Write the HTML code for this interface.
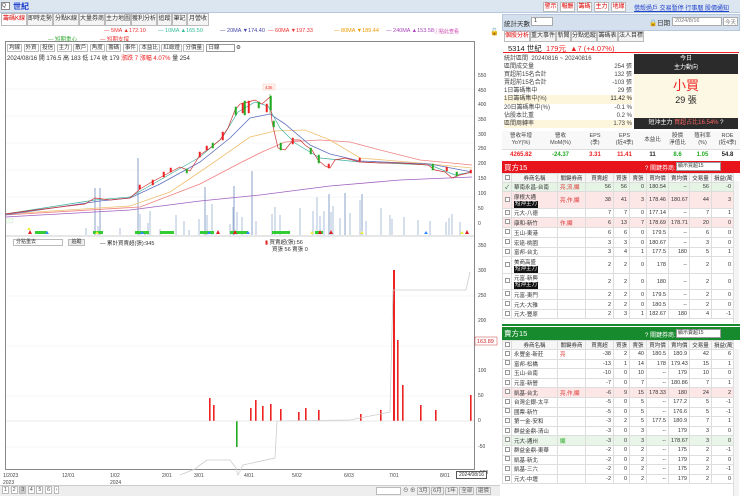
<!DOCTYPE html>
<html><head><meta charset="utf-8">
<style>
*{margin:0;padding:0;box-sizing:border-box}
body{width:740px;height:496px;overflow:hidden;background:#fff;font-family:"Liberation Sans","Noto Sans CJK TC",sans-serif;font-size:6px;color:#333;position:relative}
.a{position:absolute;white-space:nowrap}
.btn{position:absolute;border:1px solid #bbb;background:#fff;color:#d00;font-size:6px;height:10px;line-height:8px;text-align:center}
.tab{position:absolute;border:1px solid #bbb;background:#f4f4f4;height:13px;line-height:11px;font-size:6px;text-align:center;color:#333}
table{border-collapse:collapse;position:absolute;left:502px;width:231px;table-layout:fixed;font-size:5.5px}
td{border:1px solid #ddd;padding:0 2px;overflow:hidden;white-space:nowrap;text-align:right;vertical-align:middle}
td.n{text-align:left}
td.k{text-align:left;color:#d33}
td.c{text-align:center}
.tag{background:#111;color:#fff;padding:0 1px;display:inline-block;line-height:7px}
.cb{display:inline-block;width:5px;height:5px;border:1px solid #999;background:#fff}
</style></head><body>
<!-- top bar -->
<div class="a" style="left:0;top:0;width:740px;height:13px;background:#dce6f1;border-bottom:1px solid #b8c8dc"></div>
<div class="a" style="left:1px;top:2px;width:9px;height:8px;border:1px solid #888;background:#fff;font-size:5px;line-height:6px">Q</div>
<div class="a" style="left:13px;top:2px;color:#1a3acc;font-size:8px;line-height:9px;font-weight:bold">世紀</div>
<div class="btn" style="left:543px;top:2px;width:15px">警示</div>
<div class="btn" style="left:560px;top:2px;width:15px">報酬</div>
<div class="btn" style="left:577px;top:2px;width:15px">籌碼</div>
<div class="btn" style="left:594px;top:2px;width:15px">主力</div>
<div class="btn" style="left:611px;top:2px;width:15px">地緣</div>
<div class="a" style="left:634px;top:3px;color:#2244cc;font-size:6px;text-decoration:underline">借殼過戶 交易暫停 行事曆 股價通知</div>

<!-- left tabs -->
<div class="tab" style="left:1px;top:13px;width:26px;color:#d00;background:#fff">籌碼K線</div>
<div class="tab" style="left:27px;top:13px;width:26px">即時走勢</div>
<div class="tab" style="left:53px;top:13px;width:26px">分點K線</div>
<div class="tab" style="left:79px;top:13px;width:26px">大量券商</div>
<div class="tab" style="left:105px;top:13px;width:26px">主力地圖</div>
<div class="tab" style="left:131px;top:13px;width:26px">獲利分析</div>
<div class="tab" style="left:157px;top:13px;width:15px">追蹤</div>
<div class="tab" style="left:172px;top:13px;width:15px">筆記</div>
<div class="tab" style="left:187px;top:13px;width:22px">月營收</div>

<!-- MA legend -->
<div class="a" style="left:104px;top:28px;color:#e33;font-size:5.5px">— 5MA ▲172.10</div>
<div class="a" style="left:158px;top:28px;color:#3b9;font-size:5.5px">— 10MA ▲165.50</div>
<div class="a" style="left:220px;top:28px;color:#44a;font-size:5.5px">— 20MA ▼174.40</div>
<div class="a" style="left:268px;top:28px;color:#e33;font-size:5.5px">— 60MA ▼197.33</div>
<div class="a" style="left:334px;top:28px;color:#e90;font-size:5.5px">— 80MA ▼189.44</div>
<div class="a" style="left:386px;top:28px;color:#a4b;font-size:5.5px">— 240MA ▲153.58</div>
<div class="a" style="left:434px;top:28px;color:#c4a;font-size:5px">ⓘ點此查看</div>
<div class="a" style="left:48px;top:35px;color:#3a3;font-size:5.5px">— 短期重心</div>
<div class="a" style="left:100px;top:35px;color:#e33;font-size:5.5px">— 短期支撐</div>

<!-- chart frame -->
<div class="a" style="left:5px;top:41px;width:470px;height:429px;border:1px solid #888;background:#fff"></div>
<div class="a" style="left:7px;top:43px;font-size:5.5px;color:#333">
<span style="border:1px solid #bbb;padding:0 1px">均線</span> <span style="border:1px solid #bbb;padding:0 1px">外資</span> <span style="border:1px solid #bbb;padding:0 1px">投信</span> <span style="border:1px solid #bbb;padding:0 1px">主力</span> <span style="border:1px solid #bbb;padding:0 1px">散戶</span> <span style="border:1px solid #bbb;padding:0 1px">角度</span> <span style="border:1px solid #bbb;padding:0 1px">籌碼</span> <span style="border:1px solid #bbb;padding:0 1px">事件</span> <span style="border:1px solid #bbb;padding:0 1px">本益比</span> <span style="border:1px solid #bbb;padding:0 1px">紅綠燈</span> <span style="border:1px solid #bbb;padding:0 1px">分價量</span> <span style="border:1px solid #999;padding:0 14px 0 2px">日線</span> ⚙</div>
<div class="a" style="left:7px;top:53px;font-size:6px;color:#333">2024/08/16 開 176.5 高 183 低 174 收 179 <span style="color:#e22">漲跌 7 漲幅 4.07%</span> 量 254</div>

<svg class="a" style="left:0;top:0" width="500" height="496">
<g stroke="#eee" stroke-width="0.5">
<line x1="6" x2="474" y1="89" y2="89"/><line x1="6" x2="474" y1="116" y2="116"/><line x1="6" x2="474" y1="143" y2="143"/><line x1="6" x2="474" y1="170" y2="170"/><line x1="6" x2="474" y1="197" y2="197"/>
<line x1="6" x2="474" y1="296" y2="296"/><line x1="6" x2="474" y1="346" y2="346"/><line x1="6" x2="474" y1="396" y2="396"/><line x1="6" x2="474" y1="421" y2="421"/><line x1="6" x2="474" y1="447" y2="447"/>
</g>
<!-- volume bars -->
<g stroke="#9ab0d0" stroke-width="0.8">
<path d="M86 235V228M95 235V224M98 235V226M120 235V228M138 235V218M140 235V214M148 235V223M150 235V211M160 235V229M176 235V215M184 235V221M189 235V230M199 235V219M205 235V209M207 235V215M212 235V204M230 235V224M233 235V207M237 235V212M242 235V217M256 235V221M272 235V214M275 235V207M280 235V215M300 235V208M313 235V211M317 235V197M320 235V216M324 235V211M331 235V212M333 235V206M340 235V218M350 235V213M360 235V200M366 235V221M381 235V208M390 235V215M392 235V219M404 235V217M418 235V220M430 235V221M446 235V222M449 235V218M452 235V214M460 235V222"/>
</g>
<g stroke="#8aa0c8" stroke-width="1"><path d="M138 235V158M95 235V188M100 235V188M205 235V187M234 235V186M252 235V171M145 235V231M329 235V194M345 235V193M362 235V194"/></g>
<!-- signal markers -->
<g fill="#3c3"><rect x="35" y="231" width="12" height="3"/><rect x="93" y="231" width="10" height="3"/><rect x="135" y="231" width="14" height="3"/><rect x="160" y="231" width="14" height="3"/><rect x="200" y="231" width="14" height="3"/><rect x="230" y="231" width="18" height="3"/><rect x="272" y="231" width="18" height="3"/><rect x="315" y="231" width="8" height="3"/></g>
<g fill="#d22"><path d="M28 234l2-4 2 4zM216 234l2-4 2 4zM233 234l2-4 2 4zM318 234l2-4 2 4zM329 234l2-4 2 4zM465 234l2-4 2 4z"/></g>
<g fill="#ee4"><path d="M27 230l2-3 2 3zM95 234l2-3 2 3zM310 234l2-3 2 3zM360 234l2-3 2 3zM460 234l2-3 2 3z"/></g>
<g fill="#38f"><path d="M45 234l2-3 2 3zM140 234l2-3 2 3zM207 234l2-3 2 3zM246 234l2-3 2 3zM424 234l2-3 2 3z"/></g>
<!-- MA lines -->
<polyline fill="none" stroke="#a060c0" stroke-width="0.8" points="5,217 130,210 200,201 260,195 330,186 400,180 472,177"/>
<polyline fill="none" stroke="#f08080" stroke-width="0.8" points="5,215 140,207 200,184 240,163 262,152 285,142 320,140 350,142 380,150 420,160 472,165"/>
<polyline fill="none" stroke="#f0c070" stroke-width="0.8" points="5,214 130,206 170,192 210,165 250,137 275,131 305,130 330,140 360,158 420,163 472,168"/>
<polyline fill="none" stroke="#6070c0" stroke-width="0.8" points="5,215 100,201 130,198 160,184 200,162 230,138 250,118 270,114 285,124 310,145 330,154 360,161 430,164 472,172"/>
<polyline fill="none" stroke="#40b0a0" stroke-width="0.7" points="5,214 95,200 130,197 160,180 200,157 222,138 238,112 255,102 268,106 280,128 295,143 320,158 360,162 430,165 455,175 472,172"/>
<polyline fill="none" stroke="#d03030" stroke-width="0.7" points="5,214 35,210 60,207 85,204 95,198 110,200 130,198 140,189 150,183 165,175 180,167 190,171 200,155 210,148 220,140 228,128 235,110 240,104 248,102 255,100 262,104 270,97 272,122 278,148 285,150 293,140 300,140 305,145 312,150 318,160 325,166 330,168 335,160 345,158 360,162 380,163 400,163 428,165 435,170 445,172 452,178 460,175 472,172"/>
<!-- candles -->
<g fill="#e22" stroke="#e22" stroke-width="0.5">
<rect x="139" y="185" width="1.5" height="4"/><rect x="152" y="180" width="1.5" height="5"/><rect x="163" y="172" width="1.5" height="5"/><rect x="170" y="168" width="1.5" height="4"/><rect x="199" y="152" width="1.5" height="5"/><rect x="206" y="146" width="1.5" height="4"/><rect x="222" y="132" width="1.5" height="8"/><rect x="242" y="103" width="1.5" height="10"/><rect x="248" y="101" width="1.5" height="12"/><rect x="266" y="104" width="1.5" height="8"/><rect x="292" y="138" width="1.5" height="6"/><rect x="328" y="164" width="1.5" height="4"/><rect x="359" y="158" width="1.5" height="3"/><rect x="446" y="167" width="1.5" height="4"/><rect x="470" y="170" width="1.5" height="3"/>
</g>
<g fill="#2a2" stroke="#2a2" stroke-width="0.5">
<rect x="186" y="169" width="1.5" height="4"/><rect x="212" y="143" width="1.5" height="5"/><rect x="235" y="107" width="1.5" height="8"/><rect x="244" y="101" width="1.5" height="14"/><rect x="258" y="102" width="1.5" height="6"/><rect x="270" y="96" width="1.5" height="14"/><rect x="273" y="121" width="1.5" height="6"/><rect x="280" y="143" width="1.5" height="7"/><rect x="310" y="148" width="1.5" height="6"/><rect x="318" y="155" width="1.5" height="8"/><rect x="432" y="164" width="1.5" height="6"/><rect x="456" y="172" width="1.5" height="4"/>
</g>
<line x1="270" y1="94" x2="270" y2="114" stroke="#2a2" stroke-width="0.5"/>
<rect x="263" y="84" width="12" height="6" fill="#fff4ee" stroke="#f0c0b0" stroke-width="0.4"/>
<text x="265" y="89" font-size="4.5" fill="#e33">436</text>
<rect x="6" y="218" width="7" height="5" fill="#efe" stroke="#ccc" stroke-width="0.3"/>
<!-- axes labels -->
<g font-size="5" fill="#444">
<text x="478" y="77">550</text><text x="478" y="92">450</text><text x="478" y="106">400</text><text x="478" y="121">350</text><text x="478" y="136">300</text><text x="478" y="150">250</text><text x="478" y="165">200</text><text x="478" y="180">150</text><text x="478" y="195">100</text><text x="478" y="210">50</text><text x="478" y="225">0</text>
<text x="478" y="247">350</text><text x="478" y="272">300</text><text x="478" y="297">250</text><text x="478" y="322">200</text><text x="478" y="372">100</text><text x="478" y="397">50</text><text x="478" y="422">0</text><text x="478" y="448">-50</text><text x="478" y="474">-100</text>
</g>
<rect x="475" y="337" width="22" height="8" fill="#fff" stroke="#c44" stroke-width="0.5"/>
<text x="477" y="343" font-size="5.5" fill="#c22">163.89</text>
<!-- separator -->
<line x1="6" x2="474" y1="236" y2="236" stroke="#999" stroke-width="0.6"/>
<!-- lower chart -->
<g fill="#e22">
<rect x="209" y="398" width="1.6" height="23"/><rect x="213" y="405" width="1.6" height="16"/><rect x="250" y="408" width="1.6" height="13"/><rect x="255" y="400" width="1.6" height="21"/><rect x="262" y="406" width="1.6" height="15"/><rect x="270" y="404" width="1.6" height="17"/><rect x="280" y="409" width="1.6" height="12"/><rect x="298" y="412" width="1.6" height="9"/><rect x="305" y="408" width="1.6" height="13"/><rect x="318" y="410" width="1.6" height="11"/><rect x="360" y="414" width="1.6" height="7"/><rect x="380" y="410" width="1.6" height="11"/><rect x="393" y="270" width="2" height="151"/><rect x="397" y="340" width="1.6" height="81"/><rect x="402" y="385" width="1.6" height="36"/><rect x="420" y="405" width="1.6" height="16"/><rect x="435" y="410" width="1.6" height="11"/><rect x="470" y="395" width="1.6" height="26"/>
</g>
<rect x="236" y="421" width="1.6" height="26" fill="#2a2"/>
<polyline fill="none" stroke="#ccc" stroke-width="0.8" points="180,475 195,469 200,465 207,460 230,460 236,468 238,475 243,465 275,458 277,421 350,420 390,412 393,290 466,290 470,272"/>
<line x1="6" x2="474" y1="421" y2="421" stroke="#ddd" stroke-width="0.5"/>
</svg>
<div class="a" style="left:13px;top:239px;width:50px;height:7px;border:1px solid #bbb;font-size:5px;line-height:5px;padding-left:2px">分點重去</div>
<div class="a" style="left:68px;top:239px;width:17px;height:7px;border:1px solid #bbb;background:#eee;font-size:5px;line-height:5px;text-align:center">追蹤</div>
<div class="a" style="left:100px;top:239px;font-size:5.5px">— 累計買賣超(張):945</div>
<div class="a" style="left:265px;top:238px;font-size:5.5px"><span style="color:#d22">▮</span> 買賣超(張):56</div>
<div class="a" style="left:272px;top:245px;font-size:5.5px">買張 56 賣張 0</div>

<!-- x axis -->
<div class="a" style="left:3px;top:473px;font-size:5px;color:#444">1/2023</div>
<div class="a" style="left:3px;top:480px;font-size:5px;color:#444">2023</div>
<div class="a" style="left:62px;top:473px;font-size:5px;color:#444">12/01</div>
<div class="a" style="left:110px;top:473px;font-size:5px;color:#444">1/02</div>
<div class="a" style="left:110px;top:480px;font-size:5px;color:#444">2024</div>
<div class="a" style="left:162px;top:473px;font-size:5px;color:#444">2/01</div>
<div class="a" style="left:194px;top:473px;font-size:5px;color:#444">3/01</div>
<div class="a" style="left:244px;top:473px;font-size:5px;color:#444">4/01</div>
<div class="a" style="left:292px;top:473px;font-size:5px;color:#444">5/02</div>
<div class="a" style="left:344px;top:473px;font-size:5px;color:#444">6/03</div>
<div class="a" style="left:389px;top:473px;font-size:5px;color:#444">7/01</div>
<div class="a" style="left:440px;top:473px;font-size:5px;color:#444">8/01</div>
<div class="a" style="left:456px;top:471px;width:31px;height:8px;border:1px solid #555;background:#fff;font-size:5px;line-height:6px;text-align:center">2024/08/16</div>
<!-- bottom bar -->
<div class="a" style="left:0;top:485px;width:500px;height:11px;background:#eee;border-top:1px solid #ccc"></div>
<div class="a" style="left:2px;top:487px;font-size:5.5px;color:#555"><span style="border:1px solid #bbb;padding:0 1px;background:#fff">1</span> <span style="border:1px solid #bbb;padding:0 1px;background:#fff">2</span> <span style="border:1px solid #bbb;padding:0 1px;background:#ccc">3</span> <span style="border:1px solid #bbb;padding:0 1px;background:#fff">4</span> <span style="border:1px solid #bbb;padding:0 1px;background:#fff">5</span> <span style="border:1px solid #bbb;padding:0 1px;background:#fff">6</span> <span style="border:1px solid #bbb;padding:0 1px;background:#fff">›</span></div>
<div class="a" style="left:376px;top:487px;width:25px;height:8px;border:1px solid #bbb;background:#fff"></div>
<div class="a" style="left:403px;top:486px;font-size:5.5px;color:#555">⊖ ⊕ <span style="border:1px solid #bbb;padding:0 1px">3月</span> <span style="border:1px solid #bbb;padding:0 1px">6月</span> <span style="border:1px solid #bbb;padding:0 1px">1年</span> <span style="border:1px solid #bbb;padding:0 1px">全部</span> <span style="border:1px solid #bbb;padding:0 1px">還價</span></div>

<!-- right panel -->
<div class="a" style="left:490px;top:28px;font-size:7px">🔓</div>
<div class="a" style="left:502px;top:14px;width:238px;height:17px;background:#d4e0ed;border:1px solid #b8c8dc"></div>
<div class="a" style="left:504px;top:18px;font-size:6.5px;color:#333">統計天數</div>
<div class="a" style="left:531px;top:17px;width:22px;height:9px;border:1px solid #aaa;background:#fff;font-size:5.5px;padding-left:2px">1</div>
<div class="a" style="left:649px;top:17px;font-size:6.5px;color:#333">🔒日期</div>
<div class="a" style="left:672px;top:17px;width:50px;height:9px;border:1px solid #aaa;background:#fff;font-size:5.5px;padding-left:2px;color:#777">2024/8/16</div>
<div class="a" style="left:723px;top:17px;width:15px;height:9px;border:1px solid #aaa;background:#fff;font-size:5.5px;text-align:center;color:#777">今天</div>
<div class="tab" style="left:504px;top:31px;width:26px;height:11px;line-height:9px;color:#d00;background:#fff">個股分析</div>
<div class="tab" style="left:530px;top:31px;width:26px;height:11px;line-height:9px">重大事件</div>
<div class="tab" style="left:556px;top:31px;width:15px;height:11px;line-height:9px">新聞</div>
<div class="tab" style="left:571px;top:31px;width:26px;height:11px;line-height:9px">分點追蹤</div>
<div class="tab" style="left:597px;top:31px;width:21px;height:11px;line-height:9px">籌碼表</div>
<div class="tab" style="left:618px;top:31px;width:26px;height:11px;line-height:9px">法人目標</div>
<div class="a" style="left:503px;top:42px;width:236px;height:11px;border-bottom:1.5px solid #e22"></div>
<div class="a" style="left:508px;top:43px;font-size:7.5px;color:#222">5314 世紀 <span style="color:#e22">&nbsp;179元 &nbsp;▲7 (+4.07%)</span></div>

<div class="a" style="left:504px;top:55px;font-size:6px;line-height:8.1px;width:128px;color:#444">
<div>統計區間 &nbsp;20240816 ~ 20240816</div>
<div>區間成交量<span style="float:right">254 張</span></div>
<div>買超前15名合計<span style="float:right">132 張</span></div>
<div>賣超前15名合計<span style="float:right">-103 張</span></div>
<div>1日籌碼集中<span style="float:right">29 張</span></div>
<div style="background:#fdf5dc">1日籌碼集中(%)<span style="float:right;color:#222">11.42 %</span></div>
<div>20日籌碼集中(%)<span style="float:right">-0.1 %</span></div>
<div>佔股本比重<span style="float:right">0.2 %</span></div>
<div style="background:#fdf5dc">區間周轉率<span style="float:right">1.73 %</span></div>
</div>
<div class="a" style="left:634px;top:54px;width:104px;height:20px;background:#2b2b2b;color:#fff;font-size:6px;text-align:center;line-height:9px;padding-top:1px">今日<br>主力動向</div>
<div class="a" style="left:634px;top:74px;width:104px;height:44px;background:#fdf8e4"></div>
<div class="a" style="left:634px;top:79px;width:104px;text-align:center;font-size:13px;color:#e22;line-height:14px">小買</div>
<div class="a" style="left:634px;top:95px;width:104px;text-align:center;font-size:9px;color:#222;line-height:10px">29 張</div>
<div class="a" style="left:634px;top:118px;width:104px;height:11px;background:#2b2b2b;color:#fff;font-size:6px;line-height:11px;text-align:center">短沖主力 <span style="color:#f66">買超占比16.54%</span> ?</div>

<div class="a" style="left:502px;top:131px;width:238px;height:32px;font-size:5.5px;color:#444">
<div style="display:flex;text-align:center;line-height:7px;border-bottom:1px solid #ddd;background:#f8f8f8">
<div style="width:38px;padding:2px 0">營收年增<br>YoY(%)</div><div style="width:41px;padding:2px 0">營收<br>MoM(%)</div><div style="width:28px;padding:2px 0">EPS<br>(季)</div><div style="width:31px;padding:2px 0">EPS<br>(近4季)</div><div style="width:25px;padding:2px 0;line-height:14px">本益比</div><div style="width:25px;padding:2px 0">股價<br>淨值比</div><div style="width:25px;padding:2px 0">殖利率<br>(%)</div><div style="width:25px;padding:2px 0">ROE<br>(近4季)</div></div>
<div style="display:flex;text-align:center;font-size:6px;font-weight:bold;line-height:10px">
<div style="width:38px;color:#e22">4265.82</div><div style="width:41px;color:#2a2">-24.37</div><div style="width:28px;color:#e22">3.31</div><div style="width:31px;color:#e22">11.41</div><div style="width:25px;color:#222">11</div><div style="width:25px;color:#2a2">8.6</div><div style="width:25px;color:#2a2">1.05</div><div style="width:25px;color:#222">54.8</div></div>
</div>

<!-- buy header -->
<div class="a" style="left:502px;top:161px;width:238px;height:12px;background:#e8141c"></div>
<div class="a" style="left:504px;top:162px;color:#fff;font-size:7.5px">買方15</div>
<div class="a" style="left:645px;top:163px;color:#fff;font-size:6px">? 關鍵券商:</div>
<div class="a" style="left:676px;top:162px;width:45px;height:9px;background:#fff;border:1px solid #999;font-size:5px;padding-left:1px;line-height:7px">顯示買超15</div>
<table style="top:173px">
<colgroup><col style="width:9px"><col style="width:46px"><col style="width:28px"><col style="width:28px"><col style="width:16px"><col style="width:17px"><col style="width:22px"><col style="width:21px"><col style="width:22px"><col style="width:22px"></colgroup>
<tr style="height:8px;background:#f6f6f6"><td class="c"><span class="cb"></span></td><td class="c">券商名稱</td><td class="c">關鍵券商</td><td class="c">買賣超</td><td class="c">買張</td><td class="c">賣張</td><td class="c">買均價</td><td class="c">賣均價</td><td class="c">交易量</td><td class="c">損益(萬)</td></tr>
<tr style="height:9px;background:#e6f4e6"><td class="c">✓</td><td class="n">華南永昌-台南</td><td class="k">亮,流,顯</td><td>56</td><td>56</td><td>0</td><td>180.54</td><td>--</td><td>56</td><td>-0</td></tr>
<tr style="height:17px;background:#fde6e6"><td class="c"><span class="cb"></span></td><td class="n">摩根大通<br><span class="tag">短沖主力</span></td><td class="k">亮,作,顯</td><td>38</td><td>41</td><td>3</td><td>178.46</td><td>180.67</td><td>44</td><td>3</td></tr>
<tr style="height:9px"><td class="c"><span class="cb"></span></td><td class="n">元大-八德</td><td></td><td>7</td><td>7</td><td>0</td><td>177.14</td><td>--</td><td>7</td><td>1</td></tr>
<tr style="height:10px;background:#fde6e6"><td class="c"><span class="cb"></span></td><td class="n">康和-新竹</td><td class="k">作,顯</td><td>6</td><td>13</td><td>7</td><td>178.69</td><td>178.71</td><td>20</td><td>0</td></tr>
<tr style="height:10px"><td class="c"><span class="cb"></span></td><td class="n">玉山-東港</td><td></td><td>6</td><td>6</td><td>0</td><td>179.5</td><td>--</td><td>6</td><td>0</td></tr>
<tr style="height:10px"><td class="c"><span class="cb"></span></td><td class="n">宏遠-桃園</td><td></td><td>3</td><td>3</td><td>0</td><td>180.67</td><td>--</td><td>3</td><td>0</td></tr>
<tr style="height:9px"><td class="c"><span class="cb"></span></td><td class="n">富邦-台北</td><td></td><td>3</td><td>4</td><td>1</td><td>177.5</td><td>180</td><td>5</td><td>1</td></tr>
<tr style="height:17px"><td class="c"><span class="cb"></span></td><td class="n">美商高盛<br><span class="tag">短沖主力</span></td><td></td><td>2</td><td>2</td><td>0</td><td>178</td><td>--</td><td>2</td><td>0</td></tr>
<tr style="height:16px"><td class="c"><span class="cb"></span></td><td class="n">元富-新興<br><span class="tag">短沖主力</span></td><td></td><td>2</td><td>2</td><td>0</td><td>180</td><td>--</td><td>2</td><td>0</td></tr>
<tr style="height:10px"><td class="c"><span class="cb"></span></td><td class="n">元富-東門</td><td></td><td>2</td><td>2</td><td>0</td><td>179.5</td><td>--</td><td>2</td><td>0</td></tr>
<tr style="height:10px"><td class="c"><span class="cb"></span></td><td class="n">元大-大雅</td><td></td><td>2</td><td>2</td><td>0</td><td>180.5</td><td>--</td><td>2</td><td>0</td></tr>
<tr style="height:9px"><td class="c"><span class="cb"></span></td><td class="n">元大-豐原</td><td></td><td>2</td><td>3</td><td>1</td><td>182.67</td><td>180</td><td>4</td><td>-1</td></tr>
</table>
<div class="a" style="left:733px;top:181px;width:6px;height:142px;background:#f4f4f4;border-left:1px solid #ddd"></div>
<div class="a" style="left:502px;top:324px;width:238px;height:2px;background:#178a2e"></div>

<!-- sell header -->
<div class="a" style="left:502px;top:327px;width:238px;height:13px;background:#178a2e"></div>
<div class="a" style="left:504px;top:328px;color:#fff;font-size:7.5px">賣方15</div>
<div class="a" style="left:645px;top:330px;color:#fff;font-size:6px">? 關鍵券商:</div>
<div class="a" style="left:676px;top:329px;width:45px;height:9px;background:#fff;border:1px solid #999;font-size:5px;padding-left:1px;line-height:7px">顯示賣超15</div>
<table style="top:340px">
<colgroup><col style="width:9px"><col style="width:46px"><col style="width:28px"><col style="width:28px"><col style="width:16px"><col style="width:17px"><col style="width:22px"><col style="width:21px"><col style="width:22px"><col style="width:22px"></colgroup>
<tr style="height:9px;background:#f6f6f6"><td class="c"><span class="cb"></span></td><td class="c">券商名稱</td><td class="c">關鍵券商</td><td class="c">買賣超</td><td class="c">買張</td><td class="c">賣張</td><td class="c">買均價</td><td class="c">賣均價</td><td class="c">交易量</td><td class="c">損益(萬)</td></tr>
<tr style="height:9.6px"><td class="c"><span class="cb"></span></td><td class="n">永豐金-新莊</td><td class="k">亮</td><td>-38</td><td>2</td><td>40</td><td>180.5</td><td>180.9</td><td>42</td><td>6</td></tr>
<tr style="height:9.6px"><td class="c"><span class="cb"></span></td><td class="n">富邦-松橋</td><td></td><td>-13</td><td>1</td><td>14</td><td>178</td><td>179.43</td><td>15</td><td>1</td></tr>
<tr style="height:9.6px"><td class="c"><span class="cb"></span></td><td class="n">玉山-台南</td><td></td><td>-10</td><td>0</td><td>10</td><td>--</td><td>179</td><td>10</td><td>0</td></tr>
<tr style="height:9.6px"><td class="c"><span class="cb"></span></td><td class="n">元富-新營</td><td></td><td>-7</td><td>0</td><td>7</td><td>--</td><td>180.86</td><td>7</td><td>1</td></tr>
<tr style="height:9.6px;background:#fde6e6"><td class="c"><span class="cb"></span></td><td class="n">凱基-台北</td><td class="k">亮,作,顯</td><td>-6</td><td>9</td><td>15</td><td>178.33</td><td>180</td><td>24</td><td>2</td></tr>
<tr style="height:9.6px"><td class="c"><span class="cb"></span></td><td class="n">台灣企銀-太平</td><td></td><td>-5</td><td>0</td><td>5</td><td>--</td><td>177.2</td><td>5</td><td>-1</td></tr>
<tr style="height:9.6px"><td class="c"><span class="cb"></span></td><td class="n">國票-新竹</td><td></td><td>-5</td><td>0</td><td>5</td><td>--</td><td>176.6</td><td>5</td><td>-1</td></tr>
<tr style="height:9.6px"><td class="c"><span class="cb"></span></td><td class="n">第一金-安和</td><td></td><td>-3</td><td>2</td><td>5</td><td>177.5</td><td>180.9</td><td>7</td><td>1</td></tr>
<tr style="height:9.6px"><td class="c"><span class="cb"></span></td><td class="n">群益金鼎-清山</td><td></td><td>-3</td><td>0</td><td>3</td><td>--</td><td>179</td><td>3</td><td>0</td></tr>
<tr style="height:9.6px;background:#eaf5ea"><td class="c"><span class="cb"></span></td><td class="n">元大-通州</td><td class="k" style="color:#2a2">顯</td><td>-3</td><td>0</td><td>3</td><td>--</td><td>178.67</td><td>3</td><td>0</td></tr>
<tr style="height:9.6px"><td class="c"><span class="cb"></span></td><td class="n">群益金鼎-東華</td><td></td><td>-2</td><td>0</td><td>2</td><td>--</td><td>175</td><td>2</td><td>-1</td></tr>
<tr style="height:9.6px"><td class="c"><span class="cb"></span></td><td class="n">凱基-新北</td><td></td><td>-2</td><td>0</td><td>2</td><td>--</td><td>179</td><td>2</td><td>0</td></tr>
<tr style="height:9.6px"><td class="c"><span class="cb"></span></td><td class="n">凱基-三六</td><td></td><td>-2</td><td>0</td><td>2</td><td>--</td><td>175</td><td>2</td><td>-1</td></tr>
<tr style="height:9.6px"><td class="c"><span class="cb"></span></td><td class="n">元大-中壢</td><td></td><td>-2</td><td>0</td><td>2</td><td>--</td><td>179</td><td>2</td><td>0</td></tr>
</table>
<div class="a" style="left:733px;top:349px;width:6px;height:147px;background:#f4f4f4;border-left:1px solid #ddd"></div>
</body></html>
